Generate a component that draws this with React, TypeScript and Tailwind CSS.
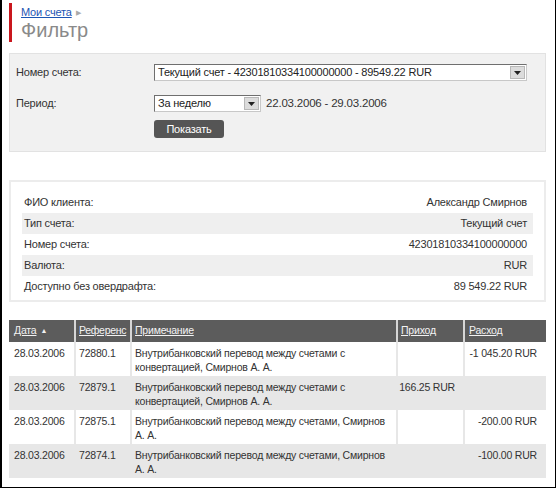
import React from 'react';

const font = { fontFamily: '"Liberation Sans", Arial, sans-serif' };

const info = [
  ['ФИО клиента:', 'Александр Смирнов'],
  ['Тип счета:', 'Текущий счет'],
  ['Номер счета:', '42301810334100000000'],
  ['Валюта:', 'RUR'],
  ['Доступно без овердрафта:', '89 549.22 RUR'],
];

const rows = [
  {
    date: '28.03.2006',
    ref: '72880.1',
    note: 'Внутрибанковский перевод между счетами с конвертацией, Смирнов А. А.',
    income: '',
    expense: '-1 045.20 RUR',
  },
  {
    date: '28.03.2006',
    ref: '72879.1',
    note: 'Внутрибанковский перевод между счетами с конвертацией, Смирнов А. А.',
    income: '166.25 RUR',
    expense: '',
  },
  {
    date: '28.03.2006',
    ref: '72875.1',
    note: 'Внутрибанковский перевод между счетами, Смирнов А. А.',
    income: '',
    expense: '-200.00 RUR',
  },
  {
    date: '28.03.2006',
    ref: '72874.1',
    note: 'Внутрибанковский перевод между счетами, Смирнов А. А.',
    income: '',
    expense: '-100.00 RUR',
  },
];

function Select({ value, width }: { value: string; width: string }) {
  return (
    <div className={`${width} h-[17px] flex items-center bg-white border border-[#6f6f6f] border-b-[#c8c8c8] border-r-[#c8c8c8]`}>
      <span className="flex-1 pl-[3px] text-[11px] leading-none text-[#222] whitespace-nowrap overflow-hidden">{value}</span>
      <span className="w-[15px] h-[13px] mr-[1px] flex items-center justify-center bg-[#dcdcdc] border border-[#b8b8b8]">
        <svg width="7" height="4" viewBox="0 0 7 4">
          <path d="M0 0h7L3.5 4z" fill="#222" />
        </svg>
      </span>
    </div>
  );
}

export default function App() {
  return (
    <div className="w-[557px] h-[489px] bg-white tracking-[-0.2px]" style={font}>
      <div className="w-[556px] h-[488px] border-l-2 border-r border-b border-black pl-[7px] pt-[3px]">
        {/* header */}
        <div className="border-l-[3px] border-[#c9161d] pl-[9px] pt-[3px] h-[39px]">
          <div className="flex items-center gap-[4px] text-[11px] leading-[13px]">
            <a href="#" className="text-[#1c55b3] underline">Мои счета</a>
            <span className="text-[#aaa] text-[7px]">▶</span>
          </div>
          <div className="text-[20px] leading-[22px] text-[#8a8a8a] tracking-normal">Фильтр</div>
        </div>

        {/* filter */}
        <div className="mt-[11px] w-[537px] h-[99px] bg-[#f1f1f1] border border-[#e2e2e2] pl-[6px] pt-[10px] text-[11px] text-[#333]">
          <div className="flex items-center">
            <span className="w-[138px]">Номер счета:</span>
            <Select width="w-[373px]" value="Текущий счет - 42301810334100000000 - 89549.22 RUR" />
          </div>
          <div className="flex items-center mt-[14px]">
            <span className="w-[138px]">Период:</span>
            <Select width="w-[107px]" value="За неделю" />
            <span className="ml-[5px] text-[11.5px]">22.03.2006 - 29.03.2006</span>
          </div>
          <div className="pl-[138px] mt-[8px]">
            <button className="w-[70px] h-[18px] rounded-[3px] bg-[#555] text-white text-[11px] leading-none">
              Показать
            </button>
          </div>
        </div>

        {/* account info */}
        <div className="mt-[28px] w-[537px] h-[122px] border-2 border-[#ececec] px-[11px] pt-[10px] text-[11px] text-[#333]">
          {info.map(([k, v], i) => (
            <div
              key={k}
              className={`h-[21px] flex items-center justify-between pl-[2px] pr-[6px] ${i % 2 === 1 ? 'bg-[#efefef]' : ''}`}
            >
              <span>{k}</span>
              <span>{v}</span>
            </div>
          ))}
        </div>

        {/* transactions */}
        <table className="mt-[18px] w-[537px] table-fixed border-collapse text-[10.5px] text-[#333]">
          <colgroup>
            <col className="w-[66px]" />
            <col className="w-[56px]" />
            <col className="w-[266px]" />
            <col className="w-[67px]" />
            <col className="w-[82px]" />
          </colgroup>
          <thead>
            <tr className="h-[22px] bg-[#5c5c5c] text-[#f2f2f2] whitespace-nowrap">
              <th className="text-left font-normal pl-[5px]">
                <a href="#" className="underline">Дата</a>
                <span className="ml-[4px] text-[7px] align-middle">▲</span>
              </th>
              <th className="text-left font-normal pl-[3px] border-l-2 border-[#d6d6d6] overflow-hidden">
                <a href="#" className="underline tracking-[-0.3px]">Референс</a>
              </th>
              <th className="text-left font-normal pl-[3px] border-l-2 border-[#d6d6d6]">
                <a href="#" className="underline">Примечание</a>
              </th>
              <th className="text-left font-normal pl-[3px] border-l-2 border-[#d6d6d6]">
                <a href="#" className="underline">Приход</a>
              </th>
              <th className="text-left font-normal pl-[4px] border-l-2 border-[#d6d6d6]">
                <a href="#" className="underline">Расход</a>
              </th>
            </tr>
          </thead>
          <tbody>
            {rows.map((r, i) => (
              <tr key={r.ref} className={`h-[34px] align-top leading-[14px] ${i % 2 === 1 ? 'bg-[#e7e7e7]' : 'bg-white'}`}>
                <td className="pl-[5px] pt-[4px] whitespace-nowrap">{r.date}</td>
                <td className="pl-[3px] pt-[4px] border-l-2 border-[#e7e7e7]">{r.ref}</td>
                <td className="pl-[3px] pr-0 pt-[4px] border-l-2 border-[#e7e7e7]">{r.note}</td>
                <td className="pr-[8px] pt-[4px] text-right whitespace-nowrap border-l-2 border-[#e7e7e7]">{r.income}</td>
                <td className="pr-[9px] pt-[4px] text-right whitespace-nowrap border-l-2 border-[#e7e7e7]">{r.expense}</td>
              </tr>
            ))}
          </tbody>
        </table>
      </div>
    </div>
  );
}
